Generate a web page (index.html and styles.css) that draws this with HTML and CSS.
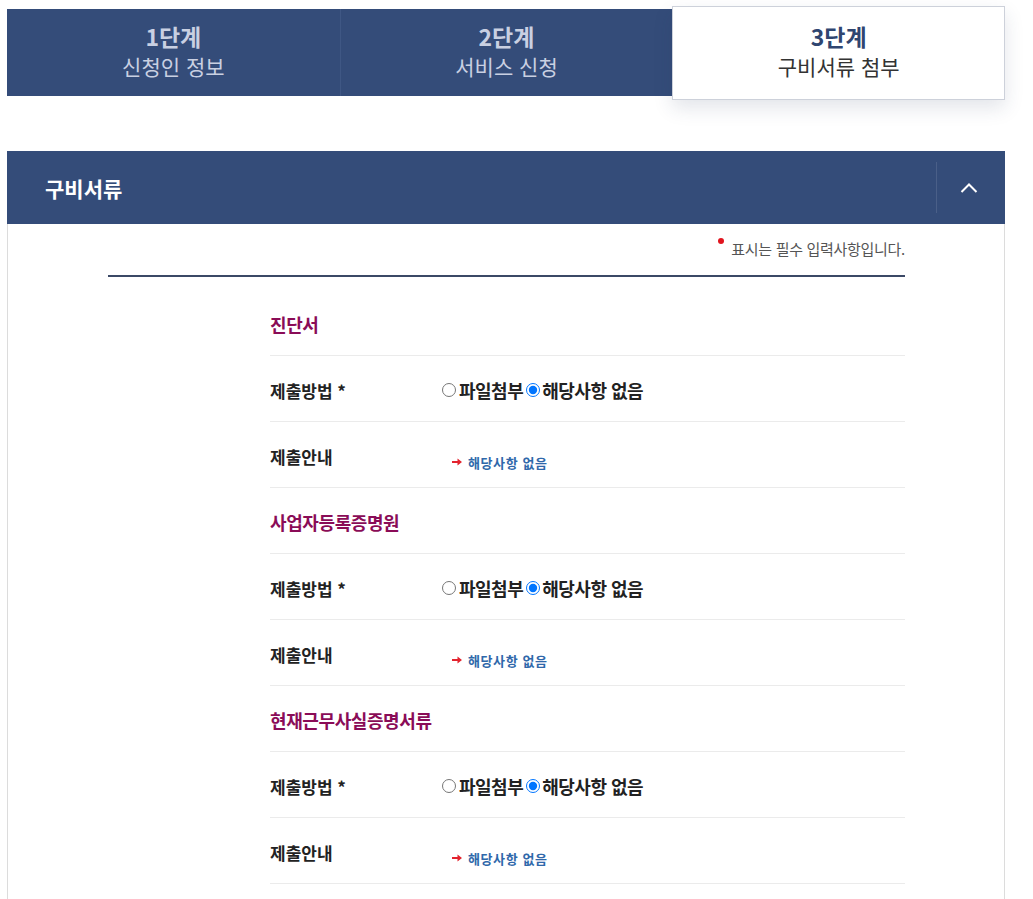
FILE: index.html
```html
<!DOCTYPE html>
<html lang="ko">
<head>
<meta charset="utf-8">
<title>구비서류 첨부</title>
<link rel="stylesheet" href="styles.css">
</head>
<body>
<div class="page">
  <ol class="steps">
    <li class="step"><strong>1단계</strong><span>신청인 정보</span></li>
    <li class="step"><strong>2단계</strong><span>서비스 신청</span></li>
    <li class="step active"><strong>3단계</strong><span>구비서류 첨부</span></li>
  </ol>

  <section class="panel">
    <header class="panel-head">
      <h2>구비서류</h2>
      <button class="toggle" type="button" aria-label="접기">
        <svg width="18" height="11" viewBox="0 0 18 11"><polyline points="1.5,10 9,2.5 16.5,10" fill="none" stroke="#fff" stroke-width="2"/></svg>
      </button>
    </header>
    <div class="panel-body">
      <p class="req-note"><span class="dot"></span>표시는 필수 입력사항입니다.</p>
      <div class="docs">
        <div class="row title">진단서</div>
        <div class="row">
          <div class="label">제출방법 *</div>
          <div class="value"><label class="opt"><input type="radio" name="m1">파일첨부</label><label class="opt"><input type="radio" name="m1" checked>해당사항 없음</label></div>
        </div>
        <div class="row">
          <div class="label">제출안내</div>
          <div class="value guide"><svg class="arrow" width="10" height="8" viewBox="0 0 10 8"><path d="M0 3h5.5V0.5L10 4 5.5 7.5V5H0z" fill="#e3232e"/></svg><span>해당사항 없음</span></div>
        </div>

        <div class="row title">사업자등록증명원</div>
        <div class="row">
          <div class="label">제출방법 *</div>
          <div class="value"><label class="opt"><input type="radio" name="m2">파일첨부</label><label class="opt"><input type="radio" name="m2" checked>해당사항 없음</label></div>
        </div>
        <div class="row">
          <div class="label">제출안내</div>
          <div class="value guide"><svg class="arrow" width="10" height="8" viewBox="0 0 10 8"><path d="M0 3h5.5V0.5L10 4 5.5 7.5V5H0z" fill="#e3232e"/></svg><span>해당사항 없음</span></div>
        </div>

        <div class="row title">현재근무사실증명서류</div>
        <div class="row">
          <div class="label">제출방법 *</div>
          <div class="value"><label class="opt"><input type="radio" name="m3">파일첨부</label><label class="opt"><input type="radio" name="m3" checked>해당사항 없음</label></div>
        </div>
        <div class="row">
          <div class="label">제출안내</div>
          <div class="value guide"><svg class="arrow" width="10" height="8" viewBox="0 0 10 8"><path d="M0 3h5.5V0.5L10 4 5.5 7.5V5H0z" fill="#e3232e"/></svg><span>해당사항 없음</span></div>
        </div>
      </div>
    </div>
  </section>
</div>
</body>
</html>
```

FILE: styles.css
```css
* { box-sizing: border-box; }

html, body {
  margin: 0;
  padding: 0;
  background: #fff;
  font-family: "Noto Sans CJK KR", "Noto Sans", sans-serif;
  color: #222;
}

.page {
  width: 998px;
  margin-left: 7px;
  padding-top: 9px;
}

/* step tabs */
.steps {
  list-style: none;
  margin: 0;
  padding: 0;
  display: grid;
  grid-template-columns: repeat(3, 1fr);
  align-items: start;
}

.step {
  height: 87px;
  padding-bottom: 3px;
  background: #344c79;
  color: #c9d0e2;
  display: flex;
  flex-direction: column;
  align-items: center;
  justify-content: center;
}

.step + .step {
  border-left: 1px solid #3f5784;
}

.step strong {
  font-size: 23px;
  font-weight: 700;
  line-height: 29px;
}

.step span {
  font-size: 21px;
  font-weight: 400;
  line-height: 30px;
}

.step.active {
  position: relative;
  z-index: 1;
  height: 94px;
  margin: -3px 0 -4px;
  background: #fff;
  border: 1px solid #cdd1da;
  box-shadow: 0 8px 18px rgba(40, 55, 90, 0.13);
  color: #333;
}

.step.active strong {
  color: #2f4570;
}

/* panel */
.panel {
  margin-top: 55px;
}

.panel-head {
  height: 73px;
  background: #344c79;
  display: flex;
  align-items: center;
  justify-content: space-between;
  padding-left: 38px;
}

.panel-head h2 {
  margin: 0;
  color: #fff;
  font-size: 21px;
  font-weight: 700;
}

.toggle {
  width: 69px;
  height: 51px;
  padding: 0 5px 0 0;
  background: transparent;
  border: 0;
  border-left: 1px solid #4a5f88;
  display: flex;
  align-items: center;
  justify-content: center;
  cursor: pointer;
}

.panel-body {
  border: 1px solid #dcdcdc;
  border-top: 0;
  padding: 0 99px 40px 100px;
}

.req-note {
  margin: 0;
  padding: 15px 0 16px;
  border-bottom: 2px solid #3b4966;
  text-align: right;
  font-size: 15px;
  line-height: 20px;
  letter-spacing: -0.3px;
  color: #555;
}

.req-note .dot {
  display: inline-block;
  width: 6px;
  height: 6px;
  border-radius: 50%;
  background: #e1141e;
  vertical-align: top;
  margin: -1px 7px 0 0;
}

.docs {
  padding: 13px 0 0 162px;
}

.row {
  height: 66px;
  padding-top: 3px;
  border-bottom: 1px solid #ebebeb;
  display: flex;
  align-items: center;
}

.row.title {
  color: #8a0c57;
  font-size: 18px;
  font-weight: 700;
  letter-spacing: -0.4px;
}

.label {
  width: 172px;
  flex: none;
  font-size: 17px;
  font-weight: 700;
  color: #222;
}

.value {
  display: flex;
  align-items: center;
}

.opt {
  display: inline-flex;
  align-items: center;
  font-size: 18px;
  font-weight: 700;
  color: #222;
  letter-spacing: -0.5px;
}

.opt input {
  width: 14px;
  height: 14px;
  margin: 0 3px 0 0;
}

.opt + .opt input {
  margin-left: 3px;
  margin-right: 2px;
}

.value.guide {
  margin-top: 12px;
  margin-left: 10px;
}

.arrow {
  margin-right: 6px;
}

.guide span {
  font-size: 13px;
  font-weight: 700;
  color: #2f68aa;
  letter-spacing: 0.6px;
}
```
